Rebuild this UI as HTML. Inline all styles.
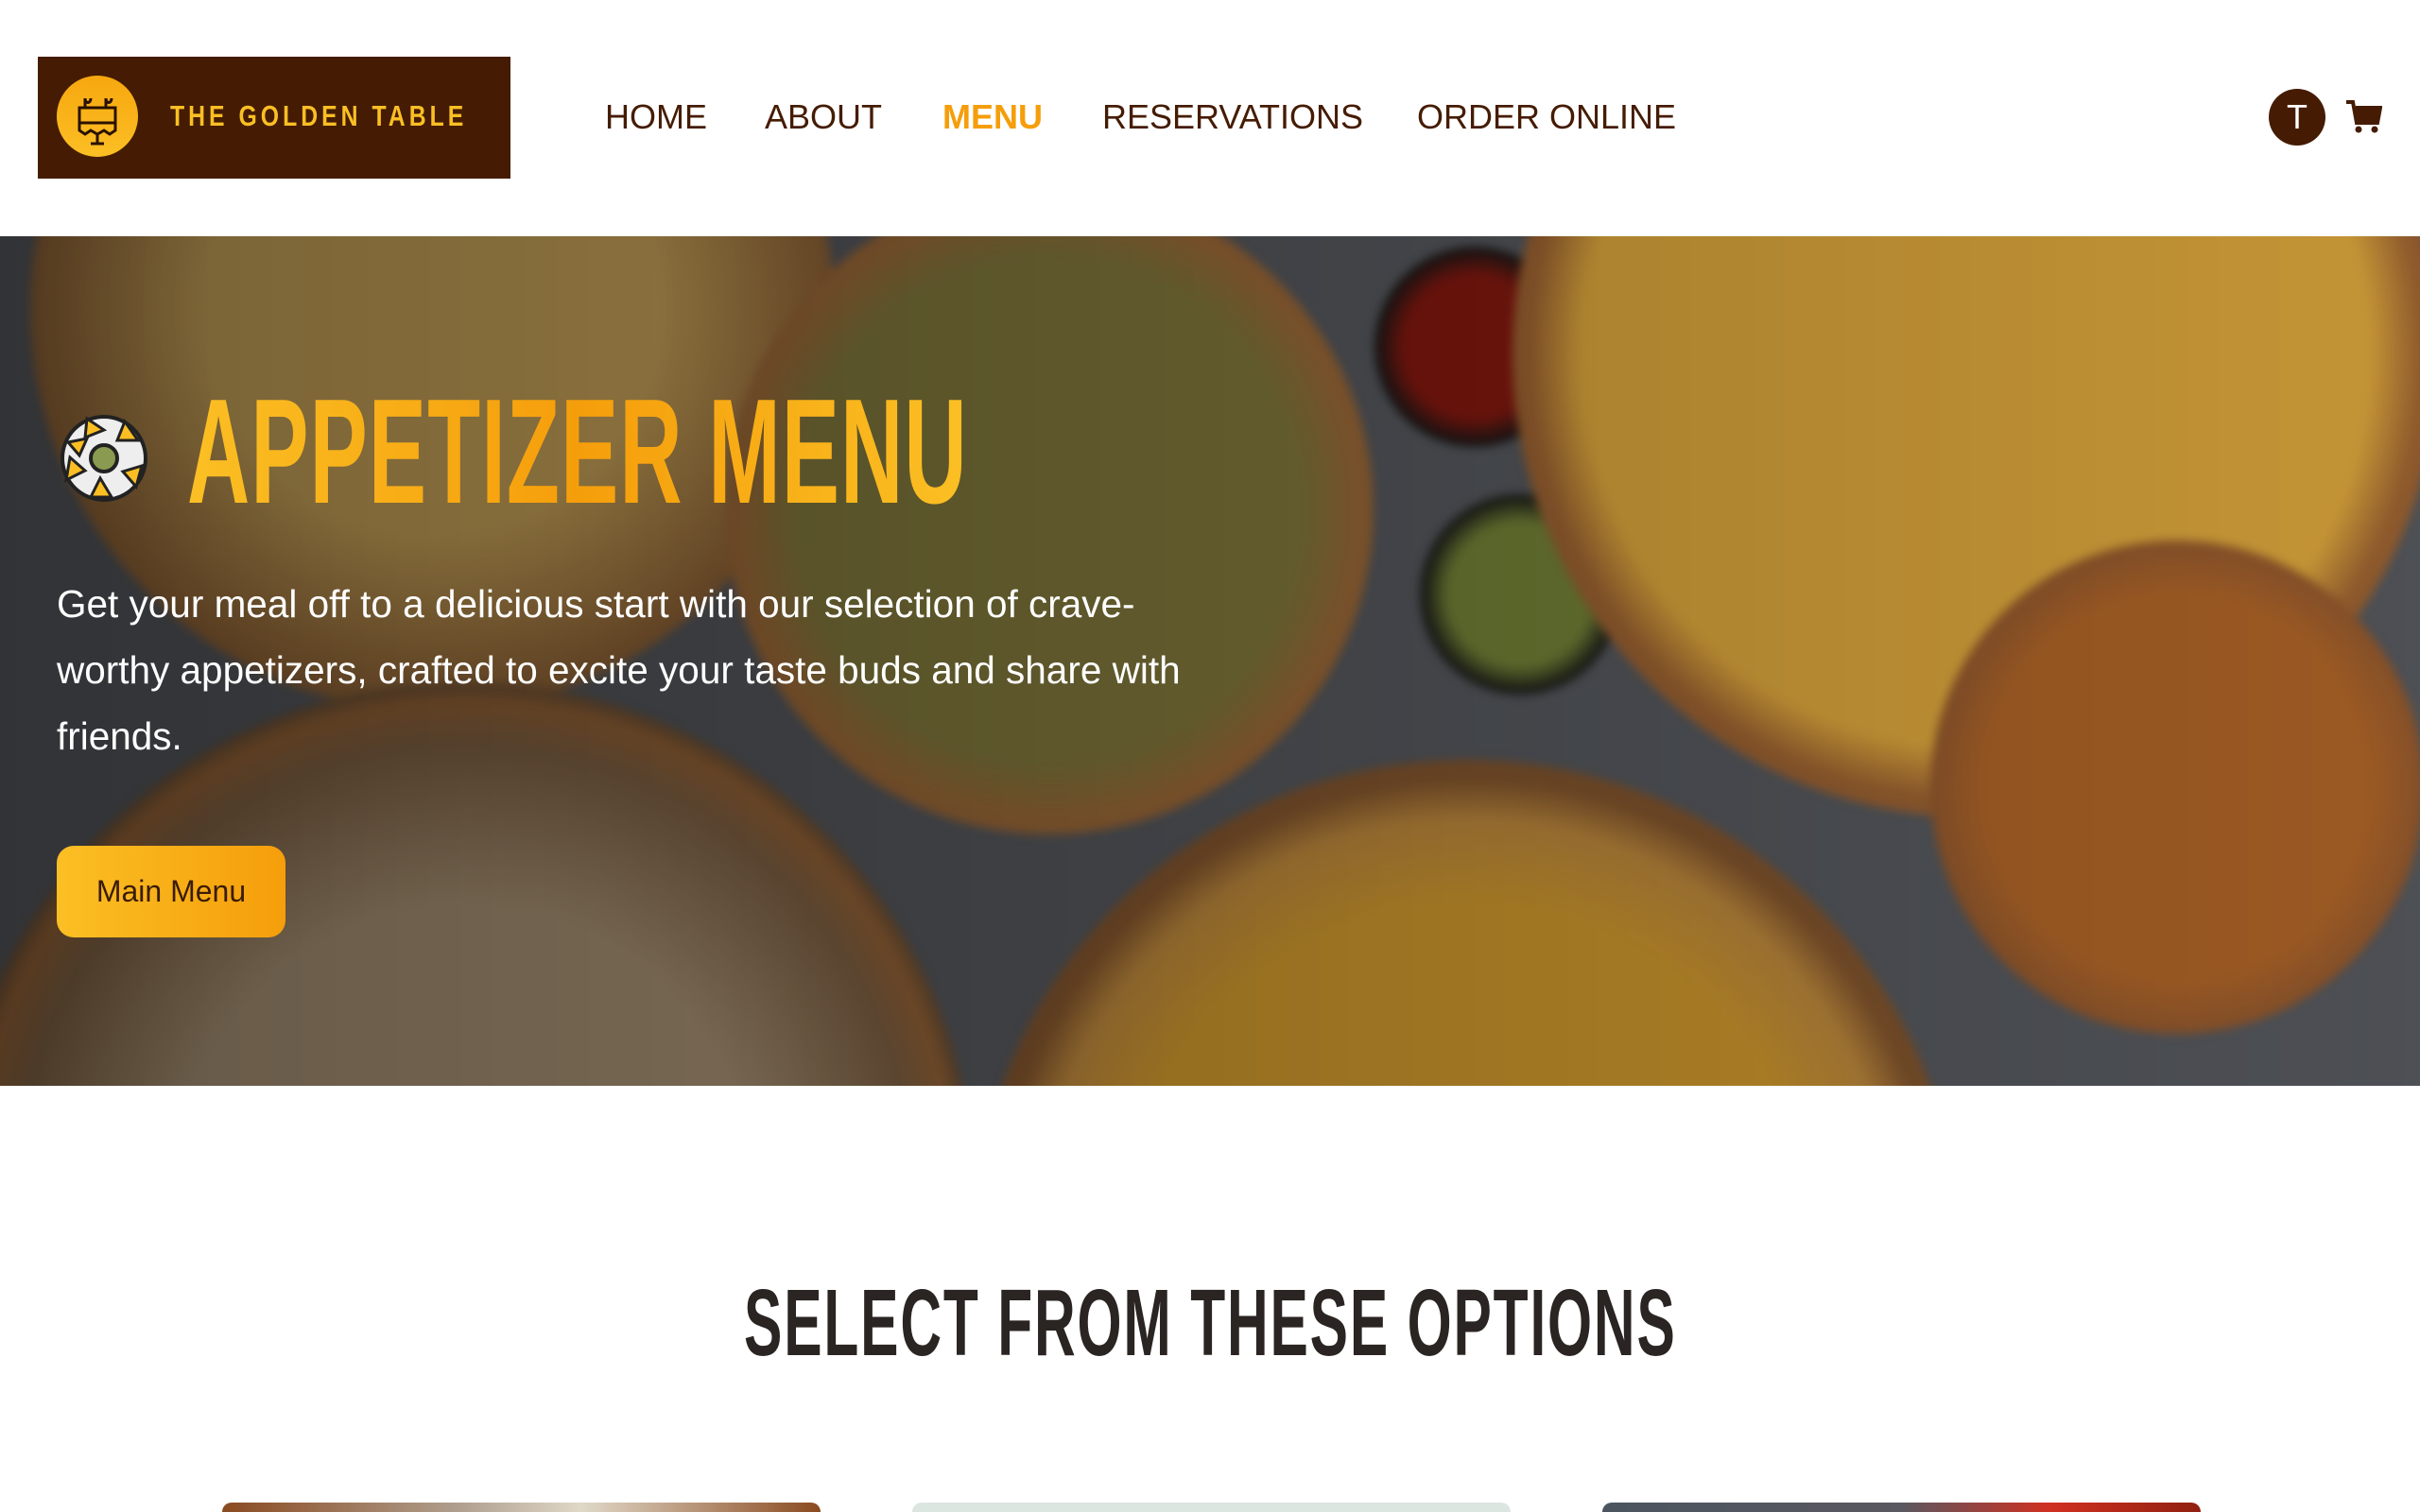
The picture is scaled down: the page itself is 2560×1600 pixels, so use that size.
<!DOCTYPE html>
<html><head><meta charset="utf-8"><style>
*{margin:0;padding:0;box-sizing:border-box}
html,body{width:2560px;height:1600px;overflow:hidden}
body{background:#fff;font-family:"Liberation Sans",sans-serif;position:relative}
.logo{position:absolute;left:40px;top:60px;width:500px;height:129px;background:#451c03}
.logo .c{position:absolute;left:20px;top:20px;width:86px;height:86px;border-radius:50%;background:linear-gradient(#f7a70f,#fbbf24)}
.logo .t{position:absolute;left:140px;top:45px;color:#fbbf24;font-weight:bold;font-size:31px;letter-spacing:5px;transform:scaleX(.8);transform-origin:left;white-space:nowrap}
.nav{position:absolute;top:103px;font-size:36px;color:#451c03;white-space:nowrap}
.av{position:absolute;left:2400px;top:94px;width:60px;height:60px;border-radius:50%;background:#451c03;color:#fff;text-align:center;font-size:36px;line-height:60px}
.hero{position:absolute;left:0;top:250px;width:2560px;height:899px;overflow:hidden;background:#5b5e64}
.p{position:absolute;border-radius:50%}
.ov{position:absolute;inset:0;background:linear-gradient(90deg,rgba(0,0,0,.45),rgba(0,0,0,.3) 50%,rgba(0,0,0,.15))}
h1{position:absolute;left:198px;top:140px;font-size:158px;line-height:1.117;font-weight:bold;transform:scaleX(.58);transform-origin:left;letter-spacing:2px;white-space:nowrap;background:linear-gradient(90deg,#fbbf24,#f59e0b 50%,#fbbf24);-webkit-background-clip:text;color:transparent}
.para{position:absolute;left:60px;top:354px;width:1250px;color:#fff;font-size:40.5px;line-height:70px}
.btn{position:absolute;left:60px;top:645px;width:242px;height:97px;border-radius:18px;background:linear-gradient(90deg,#fbbf24,#f59e0b);color:#3a1c05;font-size:32px;text-align:center;line-height:97px}
h2{position:absolute;left:0;width:2560px;top:1340px;text-align:center;font-size:100px;line-height:120px;font-weight:bold;color:#2a2522;letter-spacing:3px;white-space:nowrap;overflow:hidden}
h2 span{display:inline-block;transform:scaleX(.605)}
.card{position:absolute;top:1590px;width:633px;height:10px;border-radius:16px 16px 0 0}
</style></head><body>
<div class="logo"><div class="c">
<svg width="86" height="86" viewBox="0 0 86 86"><g fill="none" stroke="#2a1200" stroke-width="3"><rect x="24" y="34" width="38" height="16"/><path d="M24 50v8l6 4 6-4 7 4 7-4 6 4 6-4v-8M43 62v10M36 72h14M30 34v-10M36 24c0 6-6 6-6 0M52 34v-10M58 24c0 6-6 6-6 0"/></g></svg></div>
<div class="t">THE GOLDEN TABLE</div></div>
<div class="nav" style="left:640px">HOME</div>
<div class="nav" style="left:809px">ABOUT</div>
<div class="nav" style="left:997px;color:#f59e0b;font-weight:bold">MENU</div>
<div class="nav" style="left:1166px">RESERVATIONS</div>
<div class="nav" style="left:1499px">ORDER ONLINE</div>
<div class="av">T</div>
<svg style="position:absolute;left:2480px;top:104px" width="40" height="40" viewBox="0 0 40 40"><path d="M2 4h7l4 22h22l3-16H12" fill="none" stroke="#451c03" stroke-width="4"/><path d="M12 10h26l-3 16H14z" fill="#451c03"/><circle cx="15" cy="33" r="3.5" fill="#451c03"/><circle cx="32" cy="33" r="3.5" fill="#451c03"/></svg>
<div class="hero">
<div style="position:absolute;inset:0;filter:blur(5px)">
<div class="p" style="left:32px;top:-348px;width:850px;height:850px;background:radial-gradient(#d8b060 40%,#9a6a3a 70%,#7a5030)"></div>
<div class="p" style="left:-50px;top:472px;width:1080px;height:1080px;background:radial-gradient(#b8a080 40%,#8a6a4a 62%,#a06a3a 68%,#5a4a3a 72%)"></div>
<div class="p" style="left:767px;top:-53px;width:686px;height:686px;background:radial-gradient(#8a8040 55%,#a8713c 68%,#7a5030)"></div>
<div class="p" style="left:1454px;top:11px;width:212px;height:212px;background:radial-gradient(#8b1a10 50%,#1a1a1a 70%)"></div>
<div class="p" style="left:1502px;top:273px;width:212px;height:212px;background:radial-gradient(#7a8a3a 50%,#1a1a1a 70%)"></div>
<div class="p" style="left:1600px;top:-365px;width:980px;height:980px;background:radial-gradient(#e8b040 60%,#a86a35 68%,#6a4a30)"></div>
<div class="p" style="left:2042px;top:322px;width:522px;height:522px;background:radial-gradient(#b86a2a 55%,#a06030 68%,#6a4020)"></div>
<div class="p" style="left:1029px;top:554px;width:1044px;height:1044px;background:radial-gradient(#d9a030 50%,#c89040 62%,#8a5a30 68%)"></div>
</div>
<div class="ov"></div>
<svg style="position:absolute;left:62px;top:188px" width="96" height="94" viewBox="0 0 96 94"><circle cx="48" cy="47" r="44" fill="#eee" stroke="#222" stroke-width="4"/><g fill="#fbbf24" stroke="#222" stroke-width="3"><path d="M30 5l18 12-20 8z"/><path d="M70 8l14 20-22 0z"/><path d="M88 55l-6 22-14-16z"/><path d="M56 88l-22 0 10-20z"/><path d="M8 70l4-24 16 14z"/><path d="M10 30l20-4-8 18z"/></g><circle cx="48" cy="47" r="14" fill="#8a9a50" stroke="#222" stroke-width="4"/></svg>
<h1>APPETIZER MENU</h1>
<div class="para">Get your meal off to a delicious start with our selection of crave-worthy appetizers, crafted to excite your taste buds and share with friends.</div>
<div class="btn">Main Menu</div>
</div>
<h2><span>SELECT FROM THESE OPTIONS</span></h2>
<div class="card" style="left:235px;background:linear-gradient(90deg,#8a4a20,#b0a090 40%,#e0d8c8 60%,#8a4a20)"></div>
<div class="card" style="left:965px;background:#dce6e0"></div>
<div class="card" style="left:1695px;background:linear-gradient(90deg,#4a5560,#5a5860 50%,#d03020 75%,#902010)"></div>
</body></html>
